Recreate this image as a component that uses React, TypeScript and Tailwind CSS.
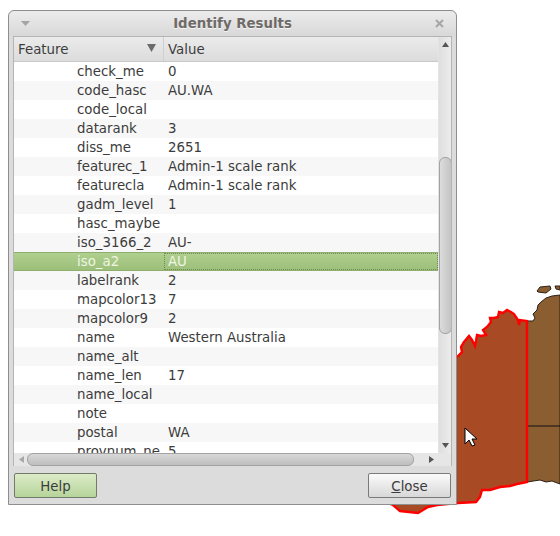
const rows: [string, string][] = [
  ["check_me", "0"],
  ["code_hasc", "AU.WA"],
  ["code_local", ""],
  ["datarank", "3"],
  ["diss_me", "2651"],
  ["featurec_1", "Admin-1 scale rank"],
  ["featurecla", "Admin-1 scale rank"],
  ["gadm_level", "1"],
  ["hasc_maybe", ""],
  ["iso_3166_2", "AU-"],
  ["iso_a2", "AU"],
  ["labelrank", "2"],
  ["mapcolor13", "7"],
  ["mapcolor9", "2"],
  ["name", "Western Australia"],
  ["name_alt", ""],
  ["name_len", "17"],
  ["name_local", ""],
  ["note", ""],
  ["postal", "WA"],
  ["provnum_ne", "5"],
];

function MapLayer() {
  return (
    <svg className="absolute left-0 top-0" width="560" height="536" viewBox="0 0 560 536">
      <path
        d="M527 321 L533 321 L535 318 L533 314 L537 310 L538 305 L541 302 L546 298 L552 296 L560 295 L560 484 L552 481 L546 482 L540 480 L527 482 Z"
        fill="#8b5e31"
        stroke="#2b2118"
        strokeWidth="1"
      />
      <path d="M537 291 L540 287 L550 286 L551 289 L546 293 L538 292 Z" fill="#8b5e31" stroke="#2b2118" strokeWidth="1" />
      <path d="M555 286 L560 286 L560 290 L556 289 Z" fill="#8b5e31" stroke="#2b2118" strokeWidth="1" />
      <line x1="527" y1="426" x2="560" y2="426" stroke="#111" strokeWidth="1" />
      <path
        d="M440 370 L457 357 L462 352 L461 347 L464 342 L469 336 L472 340 L475 346 L476 341 L477 335 L481 336 L486 335 L483 330 L487 327 L491 322 L490 318 L494 318 L498 317 L499 312 L503 313 L507 310 L511 312 L514 314 L518 320 L519 325 L520 320 L527 321 L527 482 L517 484 L510 486 L500 487 L490 490 L482 490 L480 497 L476 502 L458 503 L437 505 L428 507 L418 513 L400 511 L393 505 L380 500 L380 400 Z"
        fill="#a84a23"
        stroke="#ff0000"
        strokeWidth="2.4"
      />
      <path d="M465 428 L465 444 L469 440 L472 446 L475 445 L472 439 L477 439 Z" fill="#fff" stroke="#000" strokeWidth="1" />
    </svg>
  );
}

function Scrollbars() {
  return (
    <div className="absolute right-0 top-0 bottom-0 w-[13px] bg-gradient-to-r from-[#dedede] to-[#ececec] border-l border-[#e4e4e4]">
      <svg className="absolute left-[3px] top-[5px]" width="7" height="5" viewBox="0 0 7 5">
        <path d="M3.5 0 L7 5 L0 5 Z" fill="#555" />
      </svg>
      <div className="absolute left-0 top-[120px] h-[177px] w-[13px] rounded-[6px] border border-[#a2a2a2] bg-gradient-to-r from-[#dcdcdc] to-[#c4c4c4]" />
      <svg className="absolute left-[3px] top-[406px]" width="7" height="5" viewBox="0 0 7 5">
        <path d="M0 0 L7 0 L3.5 5 Z" fill="#555" />
      </svg>
    </div>
  );
}

export default function App() {
  return (
    <div
      className="relative h-[536px] w-[560px] overflow-hidden bg-white text-[13.33px] text-[#3c3c3c]"
      style={{ fontFamily: '"DejaVu Sans", sans-serif' }}
    >
      <MapLayer />
      <div className="absolute left-[8px] top-[10px] flex h-[495px] w-[449px] flex-col rounded-t-[6px] border border-[#8e8e8e] bg-[#dcdcdc]">
        <div className="relative flex h-[25px] shrink-0 items-center justify-center rounded-t-[6px] bg-gradient-to-b from-[#ececec] to-[#d8d8d8]">
          <svg className="absolute left-[12px] top-[10px]" width="9" height="5" viewBox="0 0 9 5">
            <path d="M0 0 L9 0 L4.5 5 Z" fill="#a4a4a4" />
          </svg>
          <span className="font-bold text-[#6e6a67] [text-shadow:0_1px_0_#f4f4f4]">Identify Results</span>
          <svg className="absolute right-[12px] top-[8px]" width="9" height="9" viewBox="0 0 9 9">
            <path d="M1 1 L8 8 M8 1 L1 8" stroke="#a6a6a6" strokeWidth="2" />
          </svg>
        </div>
        <div className="mx-[4px] flex h-[430px] w-[439px] shrink-0 flex-col border border-[#b4b4b4]">
          <div className="relative h-[416px] shrink-0 overflow-hidden bg-white pr-[13px]">
            <div className="flex h-[25px] border-b border-[#c8c8c8] bg-gradient-to-b from-[#ebebeb] to-[#dcdcdc]">
              <div className="relative flex w-[150px] items-center border-r border-[#cfcfcf] pl-[4px] pt-[2px]">
                Feature
                <svg className="absolute left-[133px] top-[7px]" width="9" height="8" viewBox="0 0 9 8">
                  <path d="M0 0 L9 0 L4.5 8 Z" fill="#6b6b6b" />
                </svg>
              </div>
              <div className="flex items-center pl-[4px] pt-[2px]">Value</div>
            </div>
            {rows.map(([k, v], i) => {
              const sel = k === "iso_a2";
              const bg = sel
                ? "border-y border-[#8fae70] bg-gradient-to-b from-[#b0d08e] to-[#9cbf7a] text-[#eef5e4]"
                : i % 2 === 1
                  ? "bg-[#f7f7f7]"
                  : "bg-white";
              return (
                <div key={k} className={`flex h-[19px] items-center ${bg}`}>
                  <div className="w-[150px] shrink-0 pl-[63px]">{k}</div>
                  <div
                    className={
                      sel
                        ? "flex h-full flex-1 items-center border border-dotted border-[#6f8a55] pl-[3px]"
                        : "flex-1 pl-[4px]"
                    }
                  >
                    {v}
                  </div>
                </div>
              );
            })}
            <Scrollbars />
          </div>
          <div className="relative h-[13px] shrink-0 bg-[#e6e6e6]">
            <svg className="absolute left-[5px] top-[3px]" width="5" height="7" viewBox="0 0 5 7">
              <path d="M5 0 L5 7 L0 3.5 Z" fill="#a8a8a8" />
            </svg>
            <div className="absolute left-[13px] top-0 h-[13px] w-[387px] rounded-[6px] border border-[#a2a2a2] bg-gradient-to-b from-[#d8d8d8] to-[#bebebe]" />
            <svg className="absolute left-[415px] top-[3px]" width="5" height="7" viewBox="0 0 5 7">
              <path d="M0 0 L0 7 L5 3.5 Z" fill="#555" />
            </svg>
          </div>
        </div>
        <div className="flex flex-1 items-start justify-between pl-[5px] pr-[5px] pt-[7px]">
          <button className="flex h-[25px] w-[83px] items-center justify-center rounded-[2px] border border-[#727a6a] bg-gradient-to-b from-[#dcebc8] to-[#b6d49a] pt-[2px] text-[#3c3c3c]">
            Help
          </button>
          <button className="flex h-[25px] w-[83px] items-center justify-center rounded-[2px] border border-[#7a7a7a] bg-gradient-to-b from-[#fbfbfb] to-[#d8d8d8] pt-[2px] text-[#3c3c3c]">
            <span>
              <span className="underline">C</span>lose
            </span>
          </button>
        </div>
      </div>
    </div>
  );
}
